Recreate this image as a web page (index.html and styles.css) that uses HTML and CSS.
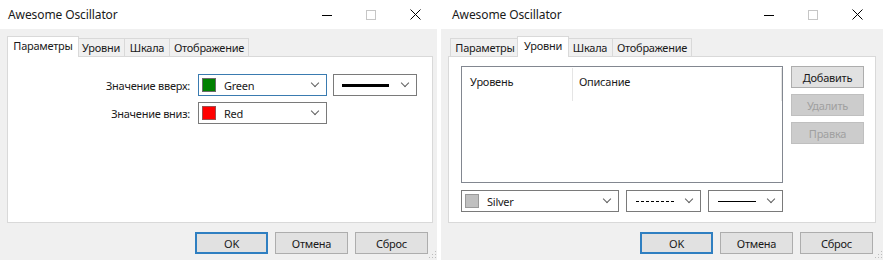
FILE: index.html
```html
<html>
<head>
<title>Awesome Oscillator</title>
<link rel="stylesheet" href="styles.css">
</head>
<body>
<div class="screen">

  <div class="window win-left">
    <div class="titlebar">
      <span class="title">Awesome Oscillator</span>
      <div class="controls">
        <span class="ctl"><svg width="10" height="10"><line x1="0" y1="5.5" x2="10" y2="5.5" stroke="#000" stroke-width="1"/></svg></span>
        <span class="ctl"><svg width="10" height="10"><rect x="0.5" y="0.5" width="9" height="9" fill="none" stroke="#c6c6c6"/></svg></span>
        <span class="ctl"><svg width="11" height="11"><path d="M0.5 0.5 L10.5 10.5 M10.5 0.5 L0.5 10.5" stroke="#000" stroke-width="1"/></svg></span>
      </div>
    </div>
    <div class="body">
      <div class="tabs">
        <div class="tab active t-params">Параметры</div>
        <div class="tab t-levels">Уровни</div>
        <div class="tab t-scale">Шкала</div>
        <div class="tab t-view">Отображение</div>
      </div>
      <div class="panel">
        <div class="params">
          <label>Значение вверх:</label>
          <div class="combo focused c-color">
            <span class="swatch green"></span><span class="ctext">Green</span>
            <span class="chev"></span>
          </div>
          <div class="combo c-line">
            <span class="line thick"></span>
            <span class="chev"></span>
          </div>
          <label>Значение вниз:</label>
          <div class="combo c-color">
            <span class="swatch red"></span><span class="ctext">Red</span>
            <span class="chev"></span>
          </div>
        </div>
      </div>
      <div class="footer">
        <button class="btn default">OK</button>
        <button class="btn">Отмена</button>
        <button class="btn">Сброс</button>
      </div>
    </div>
    <span class="grip"></span>
  </div>

  <div class="window win-right">
    <div class="titlebar">
      <span class="title">Awesome Oscillator</span>
      <div class="controls">
        <span class="ctl"><svg width="10" height="10"><line x1="0" y1="5.5" x2="10" y2="5.5" stroke="#000" stroke-width="1"/></svg></span>
        <span class="ctl"><svg width="10" height="10"><rect x="0.5" y="0.5" width="9" height="9" fill="none" stroke="#c6c6c6"/></svg></span>
        <span class="ctl"><svg width="11" height="11"><path d="M0.5 0.5 L10.5 10.5 M10.5 0.5 L0.5 10.5" stroke="#000" stroke-width="1"/></svg></span>
      </div>
    </div>
    <div class="body">
      <div class="tabs">
        <div class="tab t-params">Параметры</div>
        <div class="tab active t-levels">Уровни</div>
        <div class="tab t-scale">Шкала</div>
        <div class="tab t-view">Отображение</div>
      </div>
      <div class="panel">
        <div class="levels">
          <div class="levels-top">
            <div class="listview">
              <div class="lv-head">
                <span class="col col-level">Уровень</span>
                <span class="col col-desc">Описание</span>
              </div>
            </div>
            <div class="side-btns">
              <button class="btn">Добавить</button>
              <button class="btn" disabled>Удалить</button>
              <button class="btn" disabled>Правка</button>
            </div>
          </div>
          <div class="levels-bottom">
            <div class="combo c-silver">
              <span class="swatch silver"></span><span class="ctext">Silver</span>
              <span class="chev"></span>
            </div>
            <div class="combo c-small">
              <span class="line dashed"></span>
              <span class="chev"></span>
            </div>
            <div class="combo c-small">
              <span class="line thin"></span>
              <span class="chev"></span>
            </div>
          </div>
        </div>
      </div>
      <div class="footer">
        <button class="btn default">OK</button>
        <button class="btn">Отмена</button>
        <button class="btn">Сброс</button>
      </div>
    </div>
    <span class="grip"></span>
  </div>

</div>
</body>
</html>
```

FILE: styles.css
```css
body {
    margin: 0;
    background: #fff;
    font-family: "Noto Sans", "Open Sans", sans-serif;
    font-size: 11px;
    letter-spacing: -0.25px;
    color: #1a1a1a;
}
.screen {
    display: flex;
    gap: 4px;
    width: 883px;
    height: 260px;
    overflow: hidden;
}
.window {
    position: relative;
    display: flex;
    flex-direction: column;
    height: 260px;
}
.win-left { width: 437px; }
.win-right { width: 442px; }

/* title bar */
.titlebar {
    height: 29px;
    display: flex;
    align-items: center;
    background: #fff;
}
.title {
    flex: 1;
    padding-left: 8px;
    font-size: 12px;
    letter-spacing: -0.1px;
}
.win-right .title { padding-left: 11px; }
.controls { display: flex; }
.win-right .controls { padding-right: 4px; }
.ctl {
    width: 44px;
    height: 29px;
    display: flex;
    align-items: center;
    justify-content: center;
}

/* dialog body */
.body {
    flex: 1;
    background: #f0f0f0;
    padding: 7px 4px 0 7px;
    display: flex;
    flex-direction: column;
}
.win-right .body { padding: 7px 7px 0 7px; }

.tabs {
    display: flex;
    align-items: flex-end;
    height: 20px;
    padding-left: 2px;
    position: relative;
    z-index: 1;
}
.tab {
    height: 18px;
    box-sizing: border-box;
    border: 1px solid #d9d9d9;
    border-bottom: none;
    margin-left: -1px;
    background: #f0f0f0;
    text-align: center;
    line-height: 17px;
}
.tab.active {
    height: 21px;
    margin: 0 -2px -1px -3px;
    background: #fff;
    line-height: 18px;
    position: relative;
}
.tab.active + .tab { margin-left: 0; }
.tab:first-child { margin-left: 0; }
.tab.active:first-child { margin-left: -2px; }
.t-params { width: 70px; }
.t-levels { width: 48px; }
.t-scale { width: 46px; }
.t-view { width: 80px; }
.tab.active.t-params { width: 72px; }
.tab.active.t-levels { width: 52px; }

.panel {
    height: 167px;
    box-sizing: border-box;
    border: 1px solid #d9d9d9;
    background: #fff;
}

/* parameters tab */
.params {
    display: grid;
    grid-template-columns: 182px 129px 82px;
    grid-auto-rows: 22px;
    column-gap: 8px;
    row-gap: 6px;
    padding-top: 17px;
}
.params .c-line { margin-left: -2px; }
.params label {
    text-align: right;
    align-self: center;
}

/* combo boxes */
.combo {
    box-sizing: border-box;
    height: 22px;
    border: 1px solid #7a7a7a;
    background: #fff;
    display: flex;
    align-items: center;
    padding: 0 6px 0 3px;
}
.combo.focused { border-color: #3a7bb0; }
.swatch {
    width: 14px;
    height: 14px;
    box-sizing: border-box;
    border: 1px solid #6b6b6b;
    margin-right: 8px;
}
.green { background: #008000; }
.red { background: #ff0000; border-color: #9a5050; }
.silver { background: #c0c0c0; border-color: #9a9a9a; }
.ctext { flex: 1; }
.chev {
    width: 5px;
    height: 5px;
    border-right: 1px solid #606060;
    border-bottom: 1px solid #606060;
    transform: rotate(45deg);
    margin-top: -4px;
    margin-right: 2px;
}
.line {
    flex: 1;
    margin: 0 12px 0 6px;
}
.line.thick { border-top: 3px solid #000; margin: 0 13px 0 5px; }
.line.thin { border-top: 1px solid #000; }
.line.dashed { border-top: 1px dashed #000; }

/* levels tab */
.levels {
    padding: 9px 0 0 12px;
}
.levels-top {
    display: flex;
    gap: 8px;
}
.listview {
    width: 322px;
    height: 117px;
    box-sizing: border-box;
    border: 1px solid #828790;
    background: #fff;
}
.lv-head {
    display: flex;
    height: 33px;
    margin-top: 1px;
}
.col {
    box-sizing: border-box;
    padding: 6px 0 0 8px;
    border-right: 1px solid #e5e5e5;
}
.col-level { width: 111px; }
.col-desc { width: 209px; padding-left: 6px; }
.side-btns {
    display: flex;
    flex-direction: column;
    gap: 6px;
}
.levels-bottom {
    display: flex;
    gap: 7px;
    margin-top: 7px;
}
.c-silver { width: 158px; }
.c-small { width: 75px; }
.c-small .line { margin: 0 12px 0 6px; }

/* buttons */
.btn {
    box-sizing: border-box;
    width: 73px;
    height: 22px;
    border: 1px solid #adadad;
    background: #e1e1e1;
    font-family: inherit;
    font-size: 11px;
    letter-spacing: -0.25px;
    color: #1a1a1a;
    padding: 0;
}
.btn.default { border: 2px solid #2f7fc1; }
.btn:disabled {
    background: #cccccc;
    border-color: #bfbfbf;
    color: #a0a0a0;
}
.footer {
    display: flex;
    justify-content: flex-end;
    gap: 7px;
    padding: 9px 5px 0 0;
}
.win-right .footer { padding-right: 3px; }

/* size grip */
.grip {
    position: absolute;
    right: 1px;
    bottom: 2px;
    width: 8px;
    height: 8px;
    background-image: radial-gradient(circle, #bdbdbd 0.9px, transparent 1px);
    background-size: 3px 3px;
    clip-path: polygon(100% 0, 100% 100%, 0 100%);
}
```
